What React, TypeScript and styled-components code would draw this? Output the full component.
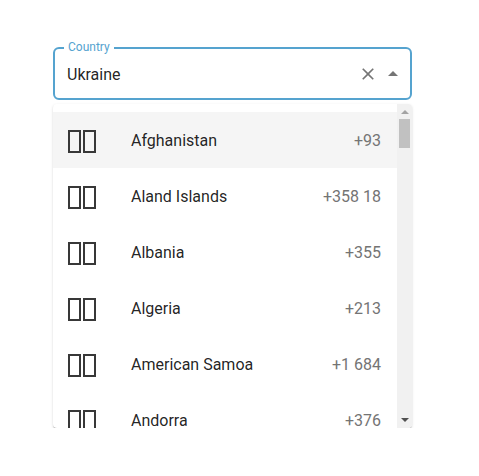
import React from "react";
import styled, { createGlobalStyle } from "styled-components";

const Global = createGlobalStyle`
  html, body { margin: 0; padding: 0; background: #fff; }
  body { font-family: Roboto, "Noto Sans", "Liberation Sans", sans-serif; }
`;

const Page = styled.div`
  padding: 47px 0 0 53px;
`;

const Wrapper = styled.div`
  width: 359px;
  display: flex;
  flex-direction: column;
  gap: 4px;
`;

const Field = styled.div`
  position: relative;
  height: 53px;
  box-sizing: border-box;
  border: 2px solid #55a3cf;
  border-radius: 6px;
  display: flex;
  align-items: center;
  padding: 0 5px 0 12px;
`;

const Label = styled.span`
  position: absolute;
  top: -9px;
  left: 9px;
  padding: 0 4px;
  background: #fff;
  font-size: 12px;
  line-height: 14px;
  color: #55a3cf;
`;

const Value = styled.span`
  flex: 1;
  font-size: 16px;
  color: rgba(0, 0, 0, 0.87);
  margin-top: 1px;
`;

const IconButton = styled.span`
  display: flex;
  align-items: center;
  justify-content: center;
  width: 24px;
  height: 24px;
  color: rgba(0, 0, 0, 0.54);
`;

const Icons = styled.div`
  display: flex;
  align-items: center;
  gap: 1px;
`;

const Popup = styled.div`
  display: flex;
  height: 324px;
  border-radius: 4px;
  background: #fff;
  box-shadow: 0 2px 1px -1px rgba(0,0,0,0.2), 0 1px 1px 0 rgba(0,0,0,0.14), 0 1px 3px 0 rgba(0,0,0,0.12);
  overflow: hidden;
`;

const List = styled.ul`
  flex: 1;
  list-style: none;
  margin: 0;
  padding: 8px 0;
  box-sizing: border-box;
  overflow: hidden;
`;

const Scrollbar = styled.div`
  width: 15px;
  display: flex;
  flex-direction: column;
  background: #f1f1f1;
`;

const ScrollButton = styled.div`
  height: 15px;
  display: flex;
  align-items: center;
  justify-content: center;
`;

const Track = styled.div`
  flex: 1;
  padding: 0 2px;
`;

const Thumb = styled.div`
  height: 29px;
  background: #c1c1c1;
`;

const Row = styled.li<{ $active?: boolean }>`
  height: 56px;
  display: flex;
  align-items: center;
  padding: 0 16px 0 14px;
  background: ${(p) => (p.$active ? "#f5f5f5" : "transparent")};
  font-size: 16px;
  color: rgba(0, 0, 0, 0.87);
`;

const Flag = styled.span`
  width: 64px;
  display: flex;
  gap: 2px;
  padding-left: 1px;
  margin-top: 3px;
  box-sizing: border-box;
`;

const Tofu = styled.span`
  width: 13px;
  height: 23px;
  box-sizing: border-box;
  border: 2px solid #383838;
`;

const Name = styled.span`
  flex: 1;
`;

const Code = styled.span`
  color: #747474;
`;

const countries: [string, string, string][] = [
  ["AF", "Afghanistan", "+93"],
  ["AX", "Aland Islands", "+358 18"],
  ["AL", "Albania", "+355"],
  ["DZ", "Algeria", "+213"],
  ["AS", "American Samoa", "+1 684"],
  ["AD", "Andorra", "+376"],
  ["AO", "Angola", "+244"],
  ["AI", "Anguilla", "+1 264"],
];

export default function App() {
  return (
    <Page>
      <Global />
      <Wrapper>
        <Field>
          <Label>Country</Label>
          <Value>Ukraine</Value>
          <Icons>
            <IconButton>
              <svg width="20" height="20" viewBox="0 0 24 24" fill="currentColor">
                <path d="M19 6.41 17.59 5 12 10.59 6.41 5 5 6.41 10.59 12 5 17.59 6.41 19 12 13.41 17.59 19 19 17.59 13.41 12z" />
              </svg>
            </IconButton>
            <IconButton>
              <svg width="24" height="24" viewBox="0 0 24 24" fill="currentColor">
                <path d="m7 14 5-5 5 5z" />
              </svg>
            </IconButton>
          </Icons>
        </Field>
        <Popup>
          <List>
            {countries.map(([iso, name, code], i) => (
              <Row key={iso} $active={i === 0}>
                <Flag title={iso}>
                  <Tofu />
                  <Tofu />
                </Flag>
                <Name>{name}</Name>
                <Code>{code}</Code>
              </Row>
            ))}
          </List>
          <Scrollbar>
            <ScrollButton>
              <svg width="8" height="5" viewBox="0 0 8 5">
                <path d="M0 5h8L4 1z" fill="#a3a3a3" />
              </svg>
            </ScrollButton>
            <Track>
              <Thumb />
            </Track>
            <ScrollButton>
              <svg width="8" height="5" viewBox="0 0 8 5">
                <path d="M0 0h8L4 4z" fill="#505050" />
              </svg>
            </ScrollButton>
          </Scrollbar>
        </Popup>
      </Wrapper>
    </Page>
  );
}
